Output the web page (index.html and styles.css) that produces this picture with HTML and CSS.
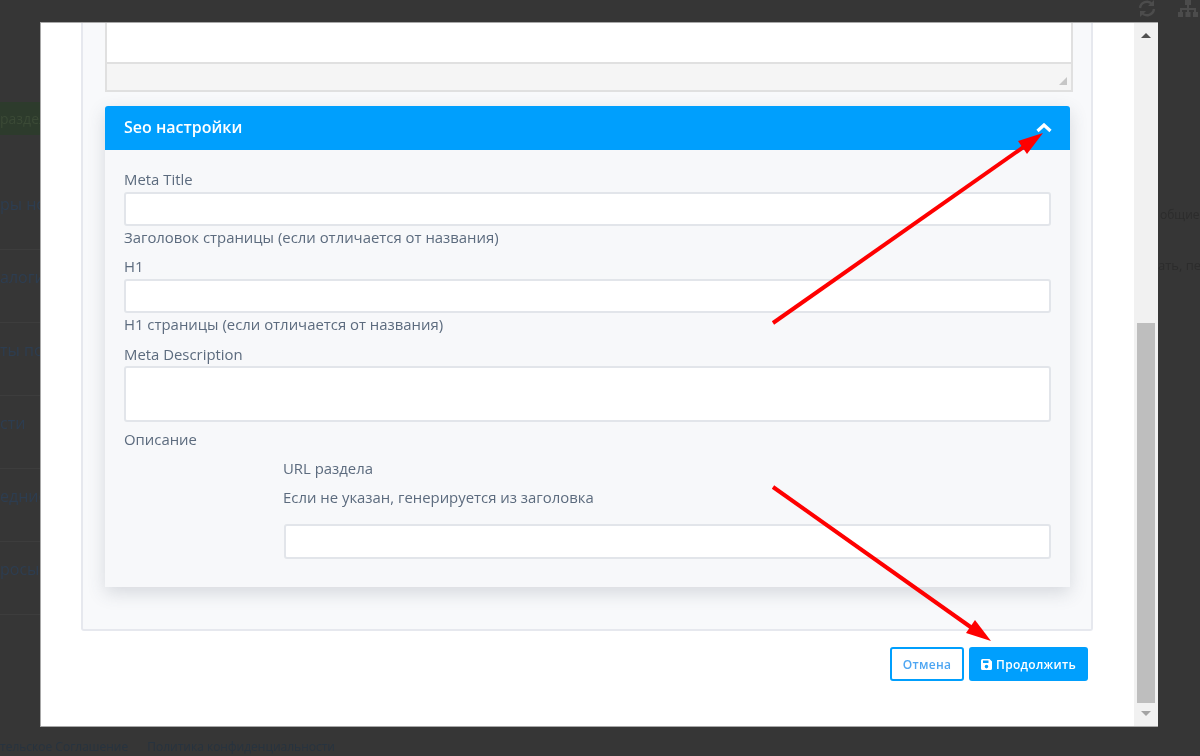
FILE: index.html
```html
<!DOCTYPE html>
<html lang="ru">
<head>
<meta charset="utf-8">
<title>Seo настройки</title>
<link rel="stylesheet" href="styles.css">
</head>
<body>
<div class="page">
  <div class="page-top">
    <aside class="side">
      <div class="side-btn">раздел</div>
      <div class="side-row">ры нов</div>
      <div class="side-row">алоги</div>
      <div class="side-row">ты пок</div>
      <div class="side-row">сти</div>
      <div class="side-row">едние</div>
      <div class="side-row">росы и</div>
    </aside>
    <div class="right">
      <div class="top-icons">
        <svg class="bg-icon" width="18" height="17" viewBox="0 0 18 17"><path d="M2 8a7 7 0 0 1 12-4M16 9a7 7 0 0 1-12 4" fill="none" stroke="#4c4c4c" stroke-width="2.4"/><path d="M16 0v6h-6zM2 17v-6h6z" fill="#4c4c4c"/></svg>
        <svg class="bg-icon" width="20" height="17" viewBox="0 0 20 17"><path d="M7 0h6v5H7zM0 12h5v5H0zM7.500 12h5v5h-5zM15 12h5v5h-5zM9 5h2v3h7v4h-2v-2h-5v2H9v-2H4v2H2V8h7z" fill="#4c4c4c"/></svg>
      </div>
      <div class="right-a">общие</div>
      <div class="right-b">ать, пе</div>
    </div>
  </div>
  <footer class="page-foot"><span>тельское Соглашение</span><span>Политика конфиденциальности</span></footer>
</div>

<div class="modal">
  <div class="modal-scroll">
    <div class="panel">
      <div class="editor">
        <div class="editor-area"></div>
        <div class="editor-status"><svg class="resize" width="8" height="8" viewBox="0 0 8 8"><path d="M8 0v8H0z" fill="#c6c6c6"/></svg></div>
      </div>
      <section class="card">
        <header class="card-head">
          <span>Seo настройки</span>
          <svg width="16" height="10" viewBox="0 0 16 10"><path d="M1.500 8 8 2l6.500 6" fill="none" stroke="#fff" stroke-width="3.200"/></svg>
        </header>
        <div class="card-body">
          <label class="lbl">Meta Title</label>
          <div class="input"></div>
          <p class="help">Заголовок страницы (если отличается от названия)</p>
          <label class="lbl lbl-h1">H1</label>
          <div class="input"></div>
          <p class="help">H1 страницы (если отличается от названия)</p>
          <label class="lbl lbl-desc">Meta Description</label>
          <div class="input area"></div>
          <p class="help help-desc">Описание</p>
          <div class="url">
            <p class="url-title">URL раздела</p>
            <p class="url-note">Если не указан, генерируется из заголовка</p>
            <div class="input url-input"></div>
          </div>
        </div>
      </section>
    </div>
    <div class="actions">
      <button class="btn btn-out">Отмена</button>
      <button class="btn btn-fill"><svg width="11" height="11" viewBox="0 0 11 11"><path fill-rule="evenodd" d="M1.500 0H8.500L11 2.500V9.500A1.500 1.500 0 0 1 9.500 11H1.500A1.500 1.500 0 0 1 0 9.500V1.500A1.500 1.500 0 0 1 1.500 0ZM2 1.500V4H7.500V1.500ZM5.500 5.800a1.800 1.800 0 1 0 0 3.600a1.800 1.800 0 1 0 0-3.600Z" fill="#fff"/></svg>Продолжить</button>
    </div>
  </div>
  <div class="scrollbar">
    <span class="sb-up"></span>
    <div class="sb-track"><div class="sb-thumb"></div></div>
    <span class="sb-down"></span>
  </div>
</div>

<svg class="arrows" width="1200" height="756" viewBox="0 0 1200 756">
  <path d="M773 323 1025 146" stroke="#fe0000" stroke-width="4" fill="none"/>
  <path d="M1043 133 1018 141 1027 154Z" fill="#fe0000"/>
  <path d="M773 487 972 628" stroke="#fe0000" stroke-width="4" fill="none"/>
  <path d="M991 641 966 633 975 620Z" fill="#fe0000"/>
</svg>
</body>
</html>
```
FILE: styles.css
```css
* { box-sizing: border-box; }
html, body { margin: 0; height: 100%; }
body {
  background: #363636;
  font-family: "Open Sans", "Noto Sans", sans-serif;
  font-size: 14.9px;
  overflow: hidden;
  color: #5c6b7e;
}
p { margin: 0; }

/* dimmed page behind the modal */
.page { height: 756px; display: flex; flex-direction: column; filter: blur(.6px); }
.page-top { flex: 1; display: flex; justify-content: space-between; min-height: 0; }
.side { width: 40px; padding-top: 102px; }
.side-btn {
  height: 33px; background: #2d3b2c; color: #3b4a36;
  line-height: 33px; font-size: 14px; white-space: nowrap; margin-bottom: 42px;
}
.side-row {
  height: 73px; padding-top: 16px; line-height: 22px; white-space: nowrap;
  font-size: 16px; color: #2d3d50; border-bottom: 1px solid #3d3d3d;
}
.right { width: 42px; color: #2c2c2c; white-space: nowrap; font-size: 13px; }
.top-icons { display: flex; height: 17px; margin-left: -20px; width: 60px; justify-content: space-between; }
.bg-icon { flex: none; }
.right-a { margin-top: 188px; padding-left: 2px; line-height: 20px; font-size: 12px; }
.right-b { margin-top: 30px; line-height: 20px; }
.page-foot {
  height: 29px; display: flex; gap: 19px; align-items: center; padding-top: 10px;
  color: #27333f; font-size: 12px; white-space: nowrap;
}

/* modal */
.modal {
  position: fixed; left: 40px; top: 22px; width: 1118px; height: 705px;
  background: #fff; display: flex; box-shadow: inset 0 0 0 1px #a8a8a8;
  filter: blur(.35px);
}
.modal-scroll { width: 1094px; overflow: hidden; margin: 1px 0 1px 1px; }
.panel {
  margin-left: 40px; width: 1012px; height: 608px; background: #f8f9fb;
  border: 2px solid #e6e8ee; border-top: 0; border-radius: 0 0 3px 3px;
  padding-left: 22px; padding-right: 20px;
}
.editor { width: 968px; height: 69px; border: 2px solid #e0e0e0; border-top: 0; background: #fff; display: flex; flex-direction: column; }
.editor-area { flex: 1; border-bottom: 2px solid #e0e0e0; }
.editor-status { height: 26px; background: #f5f5f5; display: flex; justify-content: flex-end; align-items: flex-end; padding: 0 4px 5px 0; }
.card {
  margin-top: 14px; width: 965px; height: 481px; background: #f7f8fa;
  border-radius: 3px 3px 0 0; box-shadow: 0 6px 18px rgba(60,70,90,.18);
}
.card-head {
  height: 44px; background: #009ffd; color: #fff; border-radius: 3px 3px 0 0;
  display: flex; justify-content: space-between; align-items: center;
  padding: 0 18px 2px 19px; font-size: 16px; font-weight: 600;
}
.card-head svg { margin-top: 1px; }
.card-body { padding: 20px 19px 0; }
.lbl { display: block; line-height: 19px; margin-bottom: 3px; }
.lbl-h1 { margin-top: 8px; }
.lbl-desc { margin-top: 9px; margin-bottom: 2px; }
.input { height: 34px; background: #fff; border: 2px solid #e2e5ea; border-radius: 3px; width: 927px; }
.area { height: 56px; }
.help { line-height: 23px; }
.help-desc { margin-top: 6px; }
.url { margin-left: 159px; padding-top: 8px; }
.url-title { line-height: 18px; }
.url-note { line-height: 18px; margin-top: 11px; margin-bottom: 18px; }
.url-input { width: 767px; height: 35px; margin-left: 1px; }

.actions { display: flex; justify-content: flex-end; gap: 5px; padding: 16px 46px 0 0; }
.btn {
  height: 34px; border-radius: 3px; font: 600 12px "Open Sans", sans-serif;
  display: flex; align-items: center; justify-content: center; letter-spacing: .3px;
}
.btn-out { width: 74px; background: #fff; border: 2px solid #009ffd; color: #4ea6f2; }
.btn-fill { width: 119px; background: #009ffd; border: 0; color: #fff; gap: 4px; }

/* scrollbar */
.scrollbar { width: 24px; margin: 1px 0; background: #f1f1f1; display: flex; flex-direction: column; align-items: center; }
.sb-up, .sb-down { width: 0; height: 0; border: 5px solid transparent; flex: none; }
.sb-up { border-bottom: 5px solid #505050; border-top: 0; margin: 10px 0 0; }
.sb-track { flex: 1; width: 18px; padding-top: 285px; }
.sb-thumb { height: 380px; background: #bebebe; }
.sb-down { border-top: 5px solid #a3a3a3; border-bottom: 0; margin-bottom: 10px; }

/* red annotation arrows */
.arrows { position: fixed; left: 0; top: 0; pointer-events: none; }
```
